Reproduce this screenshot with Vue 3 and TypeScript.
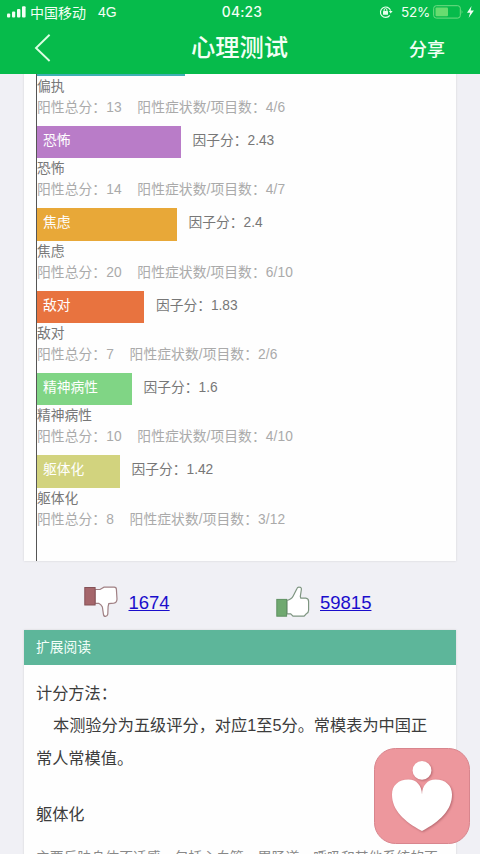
<script setup lang="ts">
interface Factor {
  name: string
  score: string
  total: number
  items: string
  width: number
  color: string
}

const factors: Factor[] = [
  { name: '偏执', score: '2.5', total: 13, items: '4/6', width: 148, color: '#3fb0b4' },
  { name: '恐怖', score: '2.43', total: 14, items: '4/7', width: 144, color: '#b97cc8' },
  { name: '焦虑', score: '2.4', total: 20, items: '6/10', width: 140, color: '#e8a838' },
  { name: '敌对', score: '1.83', total: 7, items: '2/6', width: 107.4, color: '#e8733f' },
  { name: '精神病性', score: '1.6', total: 10, items: '4/10', width: 95, color: '#80d585' },
  { name: '躯体化', score: '1.42', total: 8, items: '3/12', width: 83, color: '#d2d37e' },
]
</script>

<template>
  <div class="screen">
    <header class="top">
      <div class="status">
        <div class="side">
          <svg class="signal" width="20" height="12" viewBox="0 0 20 12" fill="#f2fff4">
            <rect x="0" y="7.4" width="3.2" height="4.2" rx="1" />
            <rect x="5" y="5.6" width="3.2" height="6" rx="1" />
            <rect x="10" y="3" width="3.4" height="8.6" rx="1" />
            <rect x="15" y="0.2" width="3.6" height="11.4" rx="1" />
          </svg>
          <span class="carrier">中国移动</span>
          <span class="net">4G</span>
        </div>
        <span class="clock">04:23</span>
        <div class="side right">
          <svg width="14" height="14" viewBox="0 0 14 14" fill="none" stroke="#e8ffec">
            <path d="M10.8 10.4A5.2 5.2 0 1 1 11.6 5.6" stroke-width="1.2" />
            <path d="M9.8 6h3.8l-1.9 2.5z" fill="#e8ffec" stroke="none" />
            <rect x="4" y="6" width="5" height="3.7" rx=".5" fill="#e8ffec" stroke="none" />
            <path d="M5.1 6.2V5a1.4 1.4 0 0 1 2.8 0v1.2" />
          </svg>
          <span class="percent">52%</span>
          <svg class="battery" width="42" height="14" viewBox="0 0 42 14">
            <rect x=".7" y=".7" width="26.6" height="12.4" rx="2.6" fill="none" stroke="#72dc83" />
            <rect x="2.5" y="2.6" width="12.5" height="8.6" rx="1" fill="#68dc70" />
            <path d="M28.6 4.8q1.8 2.1 0 4.2z" fill="#72dc83" />
            <path d="M38.5 1 34 7.7h3.1L35.6 13l5.3-7.4h-3.2z" fill="#f2fff4" />
          </svg>
        </div>
      </div>
      <nav class="nav">
        <svg class="back" width="18" height="30" viewBox="0 0 18 30" fill="none" stroke="#dcffe3" stroke-width="1.9">
          <path d="M15.6 1.8 2 15l13.6 13" />
        </svg>
        <h1>心理测试</h1>
        <span class="share">分享</span>
      </nav>
    </header>

    <main class="content">
      <section class="card chart">
        <div class="axis">
          <div v-for="f in factors" :key="f.name" class="factor">
            <div class="row">
              <div class="bar" :style="{ width: f.width + 'px', background: f.color }">{{ f.name }}</div>
              <span class="score">因子分：{{ f.score }}</span>
            </div>
            <div class="name">{{ f.name }}</div>
            <div class="detail">阳性总分：{{ f.total }}&nbsp;&nbsp;&nbsp;&nbsp;阳性症状数/项目数：{{ f.items }}</div>
          </div>
        </div>
      </section>

      <div class="votes">
        <div class="vote">
          <svg width="34" height="32" viewBox="0 0 34 32">
            <path d="M11 3.5h5l4-2.3h10.2q2.2 0 2.2 2.2l.6 9.5q0 3.4-3.2 4.3l-5 .4-.7 3-.3 7.5q-.5 2.3-2.2 2.3-2 0-2.2-2.3l-1-7q-1.1-2.5-3.7-3.8H11z" fill="#fff" stroke="#a08084" stroke-width="1.2" />
            <rect x=".8" y="1.5" width="10.3" height="17.5" fill="#a5666b" stroke="#855257" />
          </svg>
          <a href="#">1674</a>
        </div>
        <div class="vote">
          <svg width="34" height="32" viewBox="0 0 34 32">
            <path d="M11 14.3q4.5-.7 6.2-4.2L21 2.4q.5-1.4 2.4-1.2 2.5.2 1.9 2.8l-1 6.5.5 1.7h5q2.8.3 2.8 3.3v8.8q0 2.5-2.3 3.5l-2.2 2.3H17l-2.3-2.3H11z" fill="#fff" stroke="#7e9581" stroke-width="1.2" />
            <rect x=".8" y="13.4" width="9.8" height="16.8" fill="#70a970" stroke="#5f9162" />
          </svg>
          <a href="#">59815</a>
        </div>
      </div>

      <section class="card reading">
        <h2>扩展阅读</h2>
        <div class="article">
          <p>计分方法：</p>
          <p class="indent">本测验分为五级评分，对应1至5分。常模表为中国正常人常模值。</p>
          <p class="subject">躯体化</p>
          <p class="desc">主要反映身体不适感，包括心血管、胃肠道、呼吸和其他系统的不</p>
        </div>
      </section>
    </main>

    <svg class="assist" width="96" height="96" viewBox="0 0 96 96">
      <rect x=".5" y=".5" width="95" height="95" rx="21" fill="#ed979d" stroke="#d8858d" />
      <g class="figure" fill="#fff">
        <circle cx="48" cy="22.4" r="9.4" />
        <path d="M48 46.500C47.800 37.500 42.500 31.500 34.500 31.500 24.500 31.500 18 37.500 18 46.500 18 62 30 73.500 48 83 66 73.500 78 62 78 46.500 78 37.500 71.500 31.500 61.500 31.500 53.500 31.500 48.200 37.500 48 46.500z" />
      </g>
    </svg>
  </div>
</template>

<style>
body {
  margin: 0;
}
</style>

<style scoped>
.screen {
  position: relative;
  width: 480px;
  height: 854px;
  overflow: hidden;
  display: flex;
  flex-direction: column;
  background: #f0f0f5;
  font-family: "Liberation Sans", "Noto Sans CJK SC", sans-serif;
}
.top {
  position: relative;
  z-index: 1;
  flex: none;
  height: 74px;
  background: #06bb4b;
  color: #f3fff5;
}
.status {
  display: grid;
  grid-template-columns: 1fr auto 1fr;
  align-items: center;
  height: 24px;
  padding: 0 5px 0 7px;
  font-size: 13.5px;
}
.side {
  display: flex;
  align-items: center;
}
.right {
  justify-content: flex-end;
}
.signal {
  margin-right: 3px;
}
.carrier {
  font-size: 14px;
}
.net {
  margin-left: 12px;
  font-size: 14px;
}
.clock {
  padding-left: 2px;
  font-family: Inter, sans-serif;
  font-size: 13.8px;
  font-weight: 500;
  letter-spacing: .2px;
}
.percent {
  margin: 0 3px 0 8px;
  font-family: Inter, sans-serif;
  font-size: 13.5px;
  letter-spacing: -.2px;
}
.nav {
  display: grid;
  grid-template-columns: 1fr auto 1fr;
  align-items: center;
  height: 48px;
  padding: 0 35px 0 34px;
}
h1 {
  margin: 0;
  font-size: 24.3px;
  font-weight: 500;
  line-height: 36px;
}
.share {
  justify-self: end;
  font-size: 18px;
  font-weight: 500;
}
.content {
  flex: none;
}
.card {
  margin: 0 24px;
  background: #fefefe;
  box-shadow: 0 0 2px #cfd0d4;
}
.chart {
  padding-left: 12px;
  margin-top: -30.5px;
}
.axis {
  height: 517.5px;
  border-left: 1px solid #555;
  font-size: 13.75px;
  color: #777;
}
.factor {
  height: 82.35px;
}
.row {
  display: flex;
  gap: 11.5px;
  height: 32.5px;
  line-height: 29px;
}
.bar {
  box-sizing: border-box;
  padding-left: 6px;
  color: #fff;
}
.name {
  height: 21px;
  line-height: 21px;
}
.detail {
  line-height: 21px;
  letter-spacing: .09px;
  color: #aaa;
}
.votes {
  display: grid;
  grid-template-columns: 191.5px 1fr;
  height: 69px;
  padding-left: 84px;
  align-items: center;
}
.vote {
  display: flex;
  align-items: center;
  gap: 10.5px;
  padding-top: 12px;
}
.vote a {
  padding-top: 2px;
  font-size: 18.5px;
  line-height: 22px;
  color: #1a0dcc;
}
h2 {
  margin: 0;
  padding-left: 12px;
  height: 35px;
  line-height: 35px;
  background: #5db69a;
  color: #f2fff9;
  font-size: 13.75px;
  font-weight: 400;
}
.article {
  padding: 11.5px 22px 40px 12px;
  color: #3c3c3c;
  font-size: 16.2px;
  line-height: 32.5px;
}
p {
  margin: 0;
}
.indent {
  text-indent: 17px;
}
.article .subject {
  margin-top: 23.5px;
}
.article .desc {
  margin-top: 11px;
  white-space: nowrap;
  color: #888;
  font-size: 13.86px;
  line-height: 32px;
}
.assist {
  position: absolute;
  left: 374px;
  top: 748px;
}
.figure {
  filter: drop-shadow(1px 1px 1px rgba(120, 50, 60, .45));
}
</style>
